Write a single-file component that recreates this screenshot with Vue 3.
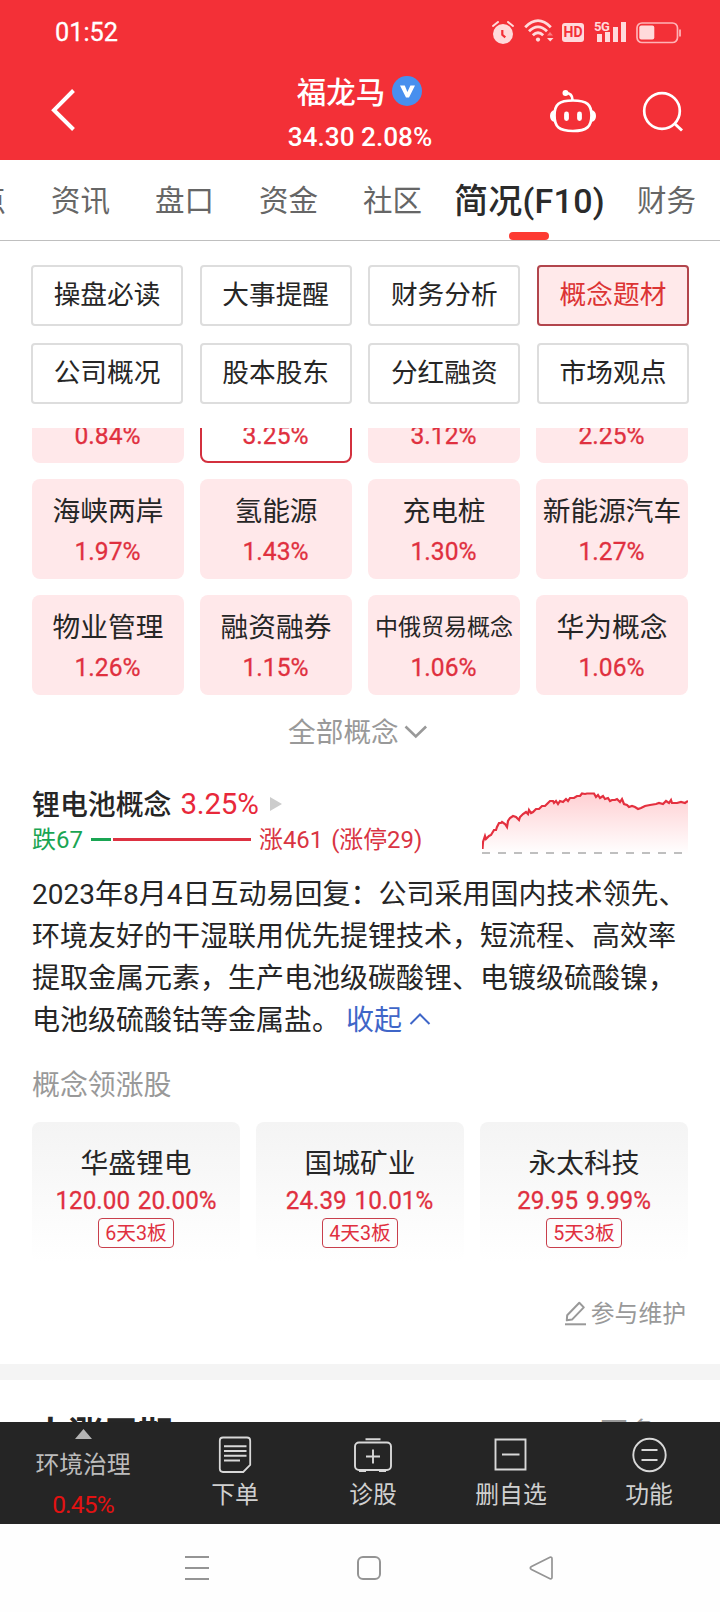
<script setup>
const tabs = [
  { label: '看点' },
  { label: '资讯' },
  { label: '盘口' },
  { label: '资金' },
  { label: '社区' },
  { label: '简况(F10)', active: true },
  { label: '财务' },
]

const sections = [
  '操盘必读', '大事提醒', '财务分析', '概念题材',
  '公司概况', '股本股东', '分红融资', '市场观点',
]

const concepts = [
  { name: '', change: '0.84%' },
  { name: '', change: '3.25%', selected: true },
  { name: '', change: '3.12%' },
  { name: '', change: '2.25%' },
  { name: '海峡两岸', change: '1.97%' },
  { name: '氢能源', change: '1.43%' },
  { name: '充电桩', change: '1.30%' },
  { name: '新能源汽车', change: '1.27%' },
  { name: '物业管理', change: '1.26%' },
  { name: '融资融券', change: '1.15%' },
  { name: '中俄贸易概念', change: '1.06%', small: true },
  { name: '华为概念', change: '1.06%' },
]

const leaders = [
  { name: '华盛锂电', quote: '120.00 20.00%', tag: '6天3板' },
  { name: '国城矿业', quote: '24.39 10.01%', tag: '4天3板' },
  { name: '永太科技', quote: '29.95 9.99%', tag: '5天3板' },
]

const trend =
  '0.5,57 1,50 3,44 4,47 7,44 9,43 12,38 14,38 15,35 17,31 19,31 20,30 23,32 25,35 26,29 28,26 31,24 34,25 37,28 38,25 41,22 44,20 46,22 47,18 49,21 51,20 54,17 57,17 60,14 63,14 66,11 68,9 71,9 72,11 74,9 76,12 78,9 81,10 84,7 86,9 88,6 92,6 95,4 98,4 100,1.5 103,2 105,1.5 112,1.5 114,5 116,3 118,6 121,4 123,7 126,6 128,9 130,8 133,8 135,7 138,10 140,7 142,12 145,13 147,15 150,14 153,15 156,17 159,16 163,14 168,13 174,12 177,11 181,12 184,9 187,11 189,8 190,11 195,11 199,10 203,11 206,9'
</script>

<template>
  <div class="phone">
    <header class="top">
      <div class="status">
        <span class="clock">01:52</span>
        <div class="indicators">
          <svg class="i-alarm" width="22" height="24" viewBox="0 0 22 24">
            <path d="M1 5 6 1M21 5 16 1" stroke="#ffdadb" stroke-width="2" stroke-linecap="round" />
            <circle cx="11" cy="13" r="10" fill="#ffdadb" />
            <path d="M10.3 9v4.8l3 2.6" fill="none" stroke="#f33037" stroke-width="2.2" />
          </svg>
          <svg class="i-wifi" width="30" height="24" viewBox="0 0 30 24">
            <g fill="none" stroke="#ffdadb" stroke-width="2.8">
              <path d="M1.2 8.2q12.8-13 25.6 0" />
              <path d="M5 12.3q9-9 18 0" />
              <path d="M8.8 16.3q5.2-5.2 10.4 0" />
            </g>
            <circle cx="14" cy="20.6" r="2.1" fill="#ffdadb" />
            <path d="M23 16.5 26 13l3 3.5z" fill="#fb7c80" />
            <path d="M23 19h6.5L26.2 22.5z" fill="#ffdadb" />
          </svg>
          <span class="hd">HD</span>
          <div class="signal">
            <span class="gen">5G</span>
            <svg width="30" height="22" viewBox="0 0 30 22">
              <path d="M0 13h5v8H0zM8 11h5v10H8zM16 6h5v15h-5zM24 1h5v20h-5z" fill="#ffdadb" />
            </svg>
          </div>
          <svg class="i-battery" width="46" height="22" viewBox="0 0 46 22">
            <rect x="1" y="1" width="40.5" height="19.5" rx="5" fill="none" stroke="#ffb3b6" stroke-width="1.7" />
            <rect x="3.3" y="3.5" width="15" height="14" rx="2" fill="#ffdadb" />
            <path d="M44 7.5v7" stroke="#ffb3b6" stroke-width="1.8" />
          </svg>
        </div>
      </div>
      <div class="titlebar">
        <svg class="back" width="26" height="44" viewBox="0 0 26 44">
          <path d="M23.5 2.5 4 22.2 23.5 41.5" fill="none" stroke="#fff" stroke-width="4" />
        </svg>
        <div class="stock">
          <div class="name">
            <span>福龙马</span>
            <svg width="30" height="30" viewBox="0 0 30 30">
              <circle cx="15" cy="15" r="15" fill="#488fee" />
              <path d="M8 9.5h4.8l2.6 6.5 3-6.5H23L17 21.5h-3z" fill="#fff" />
            </svg>
          </div>
          <div class="quote">34.30 2.08%</div>
        </div>
        <div class="actions">
          <svg width="48" height="44" viewBox="0 0 48 44">
            <g fill="none" stroke="#fff" stroke-width="2.7">
              <path d="M16.5 4q7 0 7 7" />
              <path d="M24 11.5c14 0 18.5 4 18.5 15S38 42 24 42 5.5 38 5.5 26.5 10 11.5 24 11.5z" />
            </g>
            <circle cx="16.5" cy="4" r="3" fill="#fff" />
            <path d="M5.5 21Q1 22 1 27t4.5 6zM42.5 21Q47 22 47 27t-4.5 6z" fill="#fff" />
            <path d="M17.5 25v4.500M30.5 25v4.500" stroke="#fff" stroke-width="4.800" stroke-linecap="round" />
          </svg>
          <svg class="search" width="42" height="42" viewBox="0 0 42 42">
            <circle cx="20" cy="20" r="17.8" fill="none" stroke="#fff" stroke-width="2.7" />
            <path d="m32.5 32.5 7.5 7" stroke="#fff" stroke-width="3" />
          </svg>
        </div>
      </div>
    </header>

    <nav class="tabs">
      <span v-for="t in tabs" :key="t.label" class="tab" :class="{ active: t.active }">{{ t.label }}</span>
    </nav>

    <div class="sections">
      <div v-for="(s, i) in sections" :key="s" class="section" :class="{ on: i === 3 }">{{ s }}</div>
    </div>

    <main class="content">
      <div class="concepts">
        <div v-for="(c, i) in concepts" :key="i" class="concept" :class="{ selected: c.selected }">
          <div class="cname" :class="{ small: c.small }">{{ c.name }}</div>
          <div class="cpct"><span>{{ c.change }}</span></div>
        </div>
      </div>

      <div class="all">
        <span>全部概念</span>
        <svg width="24" height="14" viewBox="0 0 24 14">
          <path d="m1.5 1.5 10.3 10 10.3-10" fill="none" stroke="#999" stroke-width="2.6" />
        </svg>
      </div>

      <div class="summary">
        <div class="info">
          <div class="heading">
            <span>锂电池概念</span>
            <span class="big">3.25%</span>
            <svg width="12" height="14" viewBox="0 0 12 14"><path d="M0 0 12 7 0 14z" fill="#ccc" /></svg>
          </div>
          <div class="breadth">
            <span class="down">跌67</span>
            <span class="bar-down"></span>
            <span class="bar-up"></span>
            <span class="up">涨461</span>
            <span class="limit">(涨停29)</span>
          </div>
        </div>
        <svg class="chart" width="206" height="64" viewBox="0 0 206 64">
          <defs>
            <linearGradient id="fade" x1="0" y1="0" x2="0" y2="1">
              <stop offset="0" stop-color="#ffd0d3" />
              <stop offset="1" stop-color="#fff" />
            </linearGradient>
          </defs>
          <polygon :points="`0,62 ${trend} 206,62`" fill="url(#fade)" />
          <polyline :points="trend" fill="none" stroke="#e4303f" stroke-width="2.2" />
          <path d="M0 61h202" stroke="#bfbfbf" stroke-width="2" stroke-dasharray="8 8" />
        </svg>
      </div>

      <p class="reply">
        2023年8月4日互动易回复：公司采用国内技术领先、<br />
        环境友好的干湿联用优先提锂技术，短流程、高效率<br />
        提取金属元素，生产电池级碳酸锂、电镀级硫酸镍，<br />
        电池级硫酸钴等金属盐。<a class="fold">收起<svg width="22" height="14" viewBox="0 0 22 14"><path d="m1.5 12 9.5-9.5L20.500 12" fill="none" stroke="#3f66c8" stroke-width="2" /></svg></a>
      </p>

      <div class="subtitle">概念领涨股</div>

      <div class="leaders">
        <div v-for="l in leaders" :key="l.name" class="leader">
          <div class="lname">{{ l.name }}</div>
          <div class="lquote"><span>{{ l.quote }}</span></div>
          <div class="ltag">{{ l.tag }}</div>
        </div>
      </div>

      <div class="maintain">
        <svg width="23" height="25" viewBox="0 0 23 25">
          <path d="M3.2 14.2 15.3 1.8l4.5 4.6L8 18.6l-5.2.7z" fill="none" stroke="#999" stroke-width="2" stroke-linejoin="round" />
          <path d="M1 23.3h21" stroke="#999" stroke-width="2" />
        </svg>
        <span>参与维护</span>
      </div>

      <div class="next">
        <span class="next-title">大涨周期</span>
        <span class="more">更多</span>
      </div>
    </main>

    <nav class="bottom">
      <div class="sector">
        <svg width="17" height="10" viewBox="0 0 17 10"><path d="M0 10 8.5 0 17 10z" fill="#b4b4b4" /></svg>
        <span class="sname">环境治理</span>
        <span class="spct">0.45%</span>
      </div>
      <div class="item">
        <svg width="40" height="40" viewBox="0 0 40 40">
          <g fill="none" stroke="#d8d8d8" stroke-width="1.8">
            <path d="M8 3.5h24q3.2 0 3.2 3.2V31l-7 7H8q-3.2 0-3.2-3.2V6.7q0-3.2 3.2-3.2z" />
            <path d="M9 12.3h22.5M9 17h22.5M9 21.8h22.5M9 26.5h16" stroke-width="1.9" />
          </g>
        </svg>
        <span>下单</span>
      </div>
      <div class="item">
        <svg width="40" height="40" viewBox="0 0 40 40">
          <g fill="none" stroke="#d8d8d8" stroke-width="1.9">
            <rect x="2" y="8.5" width="36" height="27.5" rx="4" />
            <path d="M12.5 5.2h15M20 15.5v14M13 22.500h14M6 37h7M26 37h7" />
          </g>
        </svg>
        <span>诊股</span>
      </div>
      <div class="item">
        <svg width="40" height="40" viewBox="0 0 40 40">
          <path d="M4.5 5.500h30v30h-30zM11 20.500h17.500" fill="none" stroke="#d8d8d8" stroke-width="1.9" />
        </svg>
        <span>删自选</span>
      </div>
      <div class="item">
        <svg width="40" height="40" viewBox="0 0 40 40">
          <circle cx="20.5" cy="21" r="16.2" fill="none" stroke="#d8d8d8" stroke-width="1.9" />
          <path d="M12.500 16h16M12.500 26h16" stroke="#d8d8d8" stroke-width="1.9" />
        </svg>
        <span>功能</span>
      </div>
    </nav>

    <footer class="system">
      <svg width="26" height="26" viewBox="0 0 26 26"><path d="M1 2h24M1 13h24M1 24h24" stroke="#949494" stroke-width="2" /></svg>
      <svg width="26" height="26" viewBox="0 0 26 26"><rect x="2" y="2" width="22" height="22" rx="5" fill="none" stroke="#949494" stroke-width="2" /></svg>
      <svg width="26" height="26" viewBox="0 0 26 26"><path d="M22 2.2 3.5 11.5q-2.4 1.5 0 3L22 23.8q2 .5 2-1.5V3.7q0-2-2-1.5z" fill="none" stroke="#949494" stroke-width="1.7" /></svg>
    </footer>
  </div>
</template>

<style>
body {
  margin: 0;
  background: #fff;
}
</style>

<style scoped>
.phone {
  width: 720px;
  height: 1612px;
  overflow: hidden;
  display: flex;
  flex-direction: column;
  background: #fff;
  color: #262626;
  font-family: Roboto, "Noto Sans CJK SC", sans-serif;
  font-weight: 400;
}
svg {
  display: block;
  flex: none;
}
.top {
  height: 160px;
  background: #f33037;
  color: #fff;
}
.status {
  height: 65px;
  padding: 0 38px 0 55px;
  display: flex;
  justify-content: space-between;
  align-items: center;
}
.clock {
  font-size: 25.3px;
  -webkit-text-stroke: 0.3px #fff;
}
.indicators {
  display: flex;
  align-items: center;
  color: #ffdadb;
}
.i-alarm {
  margin-right: 10px;
}
.i-wifi {
  margin-right: 8px;
  margin-top: -3px;
}
.hd {
  width: 22px;
  height: 19px;
  border-radius: 3px;
  background: #ffdadb;
  color: #f33037;
  font-size: 14px;
  font-weight: 700;
  line-height: 19px;
  text-align: center;
}
.signal {
  position: relative;
  margin: -2px 9px 0 13px;
}
.gen {
  position: absolute;
  left: -3px;
  top: -1px;
  font-size: 13px;
  line-height: 14px;
  font-weight: 700;
  letter-spacing: -0.5px;
}
.titlebar {
  height: 95px;
  padding: 0 36px 0 50px;
  display: grid;
  grid-template-columns: 120px 1fr 134px;
}
.back {
  margin-top: 23px;
}
.stock {
  text-align: center;
}
.name {
  display: flex;
  justify-content: center;
  align-items: center;
  gap: 7px;
  height: 30px;
  margin: 11px 0 0;
  padding-right: 1px;
  font-size: 29.5px;
  font-weight: 500;
  line-height: 30px;
}
.name span {
  padding-top: 3px;
}
.quote {
  margin-top: 15px;
  font-size: 26.2px;
  line-height: 32px;
  font-weight: 500;
}
.actions {
  display: flex;
  justify-content: space-between;
  padding-top: 24px;
  margin-left: -1px;
}
.search {
  margin-top: 2px;
}
.tabs {
  height: 80px;
  border-bottom: 1px solid #bfbfbf;
  display: flex;
  gap: 45px;
  margin-left: -53px;
  width: 790px;
  color: #666;
  font-size: 29.5px;
  line-height: 83px;
  white-space: nowrap;
}
.tab {
  flex: none;
}
.tab.active {
  position: relative;
  margin: 0 -13px 0 -13px;
  color: #2b2b2b;
  font-size: 34px;
  font-weight: 500;
  letter-spacing: 0.25px;
  line-height: 83px;
}
.tab.active::after {
  content: "";
  position: absolute;
  left: 50%;
  bottom: 0;
  width: 40px;
  height: 8px;
  margin-left: -20px;
  border-radius: 4px;
  background: #fd3a32;
}
.sections {
  display: grid;
  grid-template-columns: repeat(4, 152px);
  justify-content: space-between;
  grid-auto-rows: 61px;
  row-gap: 17px;
  padding: 24px 31px;
  height: 139px;
}
.section {
  box-sizing: border-box;
  height: 61px;
  border: 2px solid #ddd;
  border-radius: 4px;
  font-size: 26.7px;
  line-height: 57px;
  text-align: center;
}
.section.on {
  background: #ffe9ea;
  border-color: #b2454c;
  color: #dc3434;
}
.content {
  height: 994px;
  overflow: hidden;
  display: flex;
  flex-direction: column;
}
.concepts {
  flex: none;
  display: grid;
  grid-template-columns: repeat(4, 152px);
  grid-auto-rows: 100px;
  gap: 16px;
  margin: -65px 32px 0;
}
.concept {
  box-sizing: border-box;
  padding-top: 13px;
  border-radius: 8px;
  background: #ffe8ea;
  text-align: center;
}
.concept.selected {
  padding-top: 11px;
  border: 2px solid #d3303e;
  background: #fff;
}
.cname {
  height: 39px;
  font-size: 27.7px;
  line-height: 40px;
  white-space: nowrap;
}
.cname.small {
  font-size: 23px;
}
.cpct {
  font-size: 26.5px;
  line-height: 39px;
  color: #e0303f;
}
.cpct span {
  display: inline-block;
  transform: scaleX(0.93);
  -webkit-text-stroke: 0.3px #e0303f;
}
.all {
  flex: none;
  height: 70px;
  display: flex;
  align-items: center;
  gap: 5px;
  padding-left: 288px;
  color: #999;
  font-size: 27.7px;
}
.all svg {
  margin-top: 4px;
}
.summary {
  flex: none;
  display: flex;
  justify-content: space-between;
  height: 109px;
  padding: 0 32px;
}
.heading {
  height: 34px;
  margin-top: 21px;
  display: flex;
  align-items: center;
  font-size: 27.9px;
  font-weight: 500;
}
.big {
  margin: 2px 11px 0 9px;
  font-size: 29.5px;
  font-weight: 400;
  color: #e8283a;
  letter-spacing: -0.2px;
}
.heading svg {
  margin-top: 2px;
}
.breadth {
  height: 34px;
  display: flex;
  align-items: center;
  font-size: 24px;
  white-space: nowrap;
}
.down {
  color: #1aa553;
}
.bar-down {
  width: 20px;
  height: 3px;
  margin: 4px 0 0 8px;
  background: #1aa553;
}
.bar-up {
  width: 138px;
  height: 3px;
  margin: 4px 8px 0 2px;
  background: #dd3141;
}
.up,
.limit {
  color: #d93443;
  font-size: 23.9px;
}
.limit {
  margin-left: 8px;
}
.chart {
  margin-top: 27px;
}
.reply {
  flex: none;
  margin: 0 0 0 32px;
  font-size: 28px;
  line-height: 42px;
  white-space: nowrap;
}
.fold {
  margin-left: 6px;
  color: #3f66c8;
}
.fold svg {
  display: inline-block;
  margin-left: 7px;
  vertical-align: 4px;
}
.subtitle {
  flex: none;
  margin: 24px 0 0 32px;
  height: 40px;
  line-height: 40px;
  font-size: 27.9px;
  color: #999;
}
.leaders {
  flex: none;
  display: grid;
  grid-template-columns: repeat(3, 208px);
  gap: 16px;
  margin: 16px 32px 0;
}
.leader {
  height: 140px;
  border-radius: 8px;
  background: linear-gradient(#f4f4f4, #fff);
  display: flex;
  flex-direction: column;
  align-items: center;
}
.lname {
  margin-top: 22px;
  height: 40px;
  font-size: 27.7px;
  line-height: 40px;
}
.lquote {
  height: 34px;
  font-size: 26.5px;
  line-height: 31px;
  color: #e0303f;
  white-space: nowrap;
}
.lquote span {
  display: inline-block;
  transform: scaleX(0.915);
  word-spacing: 2px;
  -webkit-text-stroke: 0.3px #e0303f;
}
.ltag {
  box-sizing: border-box;
  width: 76px;
  height: 30px;
  border: 1px solid #c83f4c;
  border-radius: 4px;
  color: #e0303f;
  font-size: 19.7px;
  line-height: 29px;
  text-align: center;
}
.maintain {
  flex: none;
  height: 102px;
  padding-right: 34px;
  display: flex;
  justify-content: flex-end;
  align-items: center;
  gap: 4px;
  font-size: 23.8px;
  line-height: 30px;
  color: #999;
}
.maintain span {
  margin-top: 2px;
}
.next {
  flex: none;
  border-top: 16px solid #f4f4f4;
  padding: 34px 64px 0 33px;
  display: flex;
  justify-content: space-between;
}
.next-title {
  font-size: 35px;
  line-height: 44px;
  font-weight: 700;
}
.more {
  font-size: 28px;
  line-height: 40px;
  color: #999;
}
.bottom {
  height: 102px;
  background: #252525;
  display: grid;
  grid-template-columns: 166px repeat(4, 138px);
  color: #d0d0d0;
  font-size: 23.8px;
}
.sector {
  display: flex;
  flex-direction: column;
  align-items: center;
  padding-top: 7px;
}
.sname {
  margin-top: 10px;
  line-height: 32px;
  color: #bcbcbc;
}
.spct {
  margin-top: 8px;
  line-height: 32px;
  font-size: 24.5px;
  letter-spacing: -0.8px;
  color: #e31212;
}
.item {
  display: flex;
  flex-direction: column;
  align-items: center;
  padding-top: 12px;
}
.item span {
  margin-top: 5px;
  line-height: 32px;
}
.system {
  height: 88px;
  display: flex;
  justify-content: center;
  align-items: center;
  gap: 146px;
  padding-left: 18px;
  background: #fefefe;
}
</style>
